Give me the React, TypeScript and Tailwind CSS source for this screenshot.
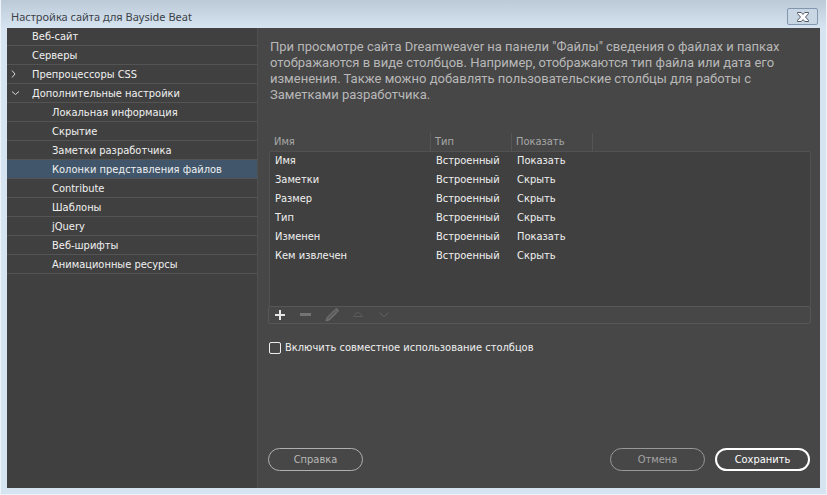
import clsx from 'clsx';

type TreeItem = {
  label: string;
  level: number;
  arrow?: 'right' | 'down';
  selected?: boolean;
};

const treeItems: TreeItem[] = [
  { label: 'Веб-сайт', level: 0 },
  { label: 'Серверы', level: 0 },
  { label: 'Препроцессоры CSS', level: 0, arrow: 'right' },
  { label: 'Дополнительные настройки', level: 0, arrow: 'down' },
  { label: 'Локальная информация', level: 1 },
  { label: 'Скрытие', level: 1 },
  { label: 'Заметки разработчика', level: 1 },
  { label: 'Колонки представления файлов', level: 1, selected: true },
  { label: 'Contribute', level: 1 },
  { label: 'Шаблоны', level: 1 },
  { label: 'jQuery', level: 1 },
  { label: 'Веб-шрифты', level: 1 },
  { label: 'Анимационные ресурсы', level: 1 },
];

const columns = [
  { name: 'Имя', type: 'Встроенный', show: 'Показать' },
  { name: 'Заметки', type: 'Встроенный', show: 'Скрыть' },
  { name: 'Размер', type: 'Встроенный', show: 'Скрыть' },
  { name: 'Тип', type: 'Встроенный', show: 'Скрыть' },
  { name: 'Изменен', type: 'Встроенный', show: 'Показать' },
  { name: 'Кем извлечен', type: 'Встроенный', show: 'Скрыть' },
];

function TitleBar() {
  return (
    <header className="flex h-7 shrink-0 items-end justify-between bg-linear-to-b from-[#bccad8] to-[#d6e3f1] pr-2 pl-2.5">
      <h1 className="font-['Noto_Sans','Open_Sans',sans-serif] leading-[22px] text-[#3d4247]">
        Настройка сайта для Bayside Beat
      </h1>
      <button
        type="button"
        aria-label="Закрыть"
        className="mb-[3px] flex h-[17px] w-[31px] items-center justify-center rounded-xs border border-[#8296b0] bg-[#c9d6e4]"
      >
        <svg width="12" height="10" viewBox="0 0 12 10">
          <path
            d="M.5.5h3.700L6 2.400 7.800.5h3.700v1.200L8.500 5l3 3.300v1.200H7.800L6 7.600 4.200 9.500H.5V8.300L3.500 5l-3-3.300z"
            fill="#fff"
            stroke="#50586a"
            strokeWidth="1"
          />
        </svg>
      </button>
    </header>
  );
}

function Sidebar() {
  return (
    <nav className="w-[251px] shrink-0 border-r border-[#505050] bg-[#404040] text-[#f0f0f0]">
      <ul className="-mt-px">
        {treeItems.map((item) => (
          <li key={item.label}>
            <button
              type="button"
              className={clsx(
                'flex h-[19px] w-full items-center border-b border-[#545454] pt-0.5 text-left',
                item.selected && 'bg-[#41566b]',
              )}
            >
              <span className="flex w-[25px] shrink-0 pl-1">
                {item.arrow && (
                  <svg width="10" height="10" viewBox="0 0 10 10" fill="none" stroke="#d8d8d8">
                    <path d={item.arrow === 'right' ? 'M1 .500 4 4 1 7.500' : 'M1 2.500 4.500 5.500 8 2.500'} />
                  </svg>
                )}
              </span>
              <span className={clsx(item.level === 1 && 'pl-5')}>{item.label}</span>
            </button>
          </li>
        ))}
      </ul>
    </nav>
  );
}

function ColumnsTable() {
  return (
    <table className="mt-[30px] flex flex-col leading-[18px]">
      <thead className="block text-[#a8a8a8]">
        <tr className="grid h-[18px] grid-cols-[163px_81px_81px_1fr] text-left">
          <th className="border-r border-[#555] pl-1.5 font-normal">Имя</th>
          <th className="border-r border-[#555] pl-1 font-normal">Тип</th>
          <th className="border-r border-[#555] pl-1 font-normal">Показать</th>
        </tr>
      </thead>
      <tbody className="ml-px block h-[156px] rounded-xs border border-[#525252] bg-[#404040] text-[#f0f0f0]">
        {columns.map((column) => (
          <tr key={column.name} className="grid h-[19px] grid-cols-[161px_81px_1fr]">
            <td className="pl-[5px]">{column.name}</td>
            <td className="pl-[5px]">{column.type}</td>
            <td className="pl-[5px]">{column.show}</td>
          </tr>
        ))}
      </tbody>
    </table>
  );
}

function Toolbar() {
  return (
    <div className="-mt-px flex h-[18px] items-center gap-2.5 rounded-xs border border-[#575757] pl-[3px]">
      <button type="button" aria-label="Добавить" className="flex size-4 items-center justify-center">
        <svg width="10" height="10" viewBox="0 0 10 10">
          <path d="M4 0h2v4h4v2H6v4H4V6H0V4h4z" fill="#e6e6e6" />
        </svg>
      </button>
      <button type="button" aria-label="Удалить" disabled className="flex size-4 items-center justify-center">
        <svg width="12" height="10" viewBox="0 0 12 10">
          <path d="M0 3h11v3H0z" fill="#747474" />
        </svg>
      </button>
      <button type="button" aria-label="Изменить" disabled className="flex size-4 items-center justify-center">
        <svg width="14" height="14" viewBox="0 0 14 14">
          <path
            d="M1 13 2 9.500 9.500 2l2.500 2.500L4.500 12zM10.200 1.300 11.500.3l2.200 2.200-1 1.300z"
            fill="#686868"
            stroke="#808080"
            strokeWidth=".6"
          />
          <path d="m3 10.500 7-7" stroke="#4c4c4c" />
        </svg>
      </button>
      <button type="button" aria-label="Вверх" disabled className="flex size-4 items-center justify-center">
        <svg width="12" height="10" viewBox="0 0 12 10" fill="none" stroke="#5b5b5b">
          <path d="M2 5.500 6 2l4 3.500M1 6.500h10" />
        </svg>
      </button>
      <button type="button" aria-label="Вниз" disabled className="flex size-4 items-center justify-center">
        <svg width="12" height="10" viewBox="0 0 12 10" fill="none" stroke="#616161">
          <path d="M1.500 2.500 6 7l4.500-4.500" />
        </svg>
      </button>
    </div>
  );
}

export default function App() {
  return (
    <div className="flex min-h-screen flex-col border-x border-b border-[#edf3f9] bg-[#d6e3f1] font-['DejaVu_Sans_Condensed','DejaVu_Sans',sans-serif] text-[11px] leading-4">
      <TitleBar />
      <div className="mx-1.5 mb-1.5 flex grow">
        <Sidebar />
        <main className="flex grow flex-col bg-[#474747] pt-[11px] pr-[9px] pb-[17px] pl-2.5">
          <p className="max-w-[520px] pl-0.5 font-['Roboto','Noto_Sans',sans-serif] text-[13px] text-[#b8b8b8]">
            При просмотре сайта Dreamweaver на панели "Файлы" сведения о файлах и папках отображаются в виде
            столбцов. Например, отображаются тип файла или дата его изменения. Также можно добавлять
            пользовательские столбцы для работы с Заметками разработчика.
          </p>

          <ColumnsTable />
          <Toolbar />

          <label className="mt-4 flex items-center gap-1 self-start pl-px text-[#f0f0f0]">
            <input type="checkbox" className="size-3 appearance-none rounded-xs border border-[#ececec]" />
            Включить совместное использование столбцов
          </label>

          <footer className="mt-auto flex justify-between pr-px text-[#b8b8b8]">
            <button type="button" className="h-[23px] w-[95px] rounded-full border border-[#b0b0b0]">
              Справка
            </button>
            <div className="flex gap-2.5">
              <button type="button" className="h-[23px] w-[95px] rounded-full border border-[#989898] text-[#a4a4a4]">
                Отмена
              </button>
              <button type="button" className="h-[23px] w-[95px] rounded-full border-2 border-white text-white">
                Сохранить
              </button>
            </div>
          </footer>
        </main>
      </div>
    </div>
  );
}
